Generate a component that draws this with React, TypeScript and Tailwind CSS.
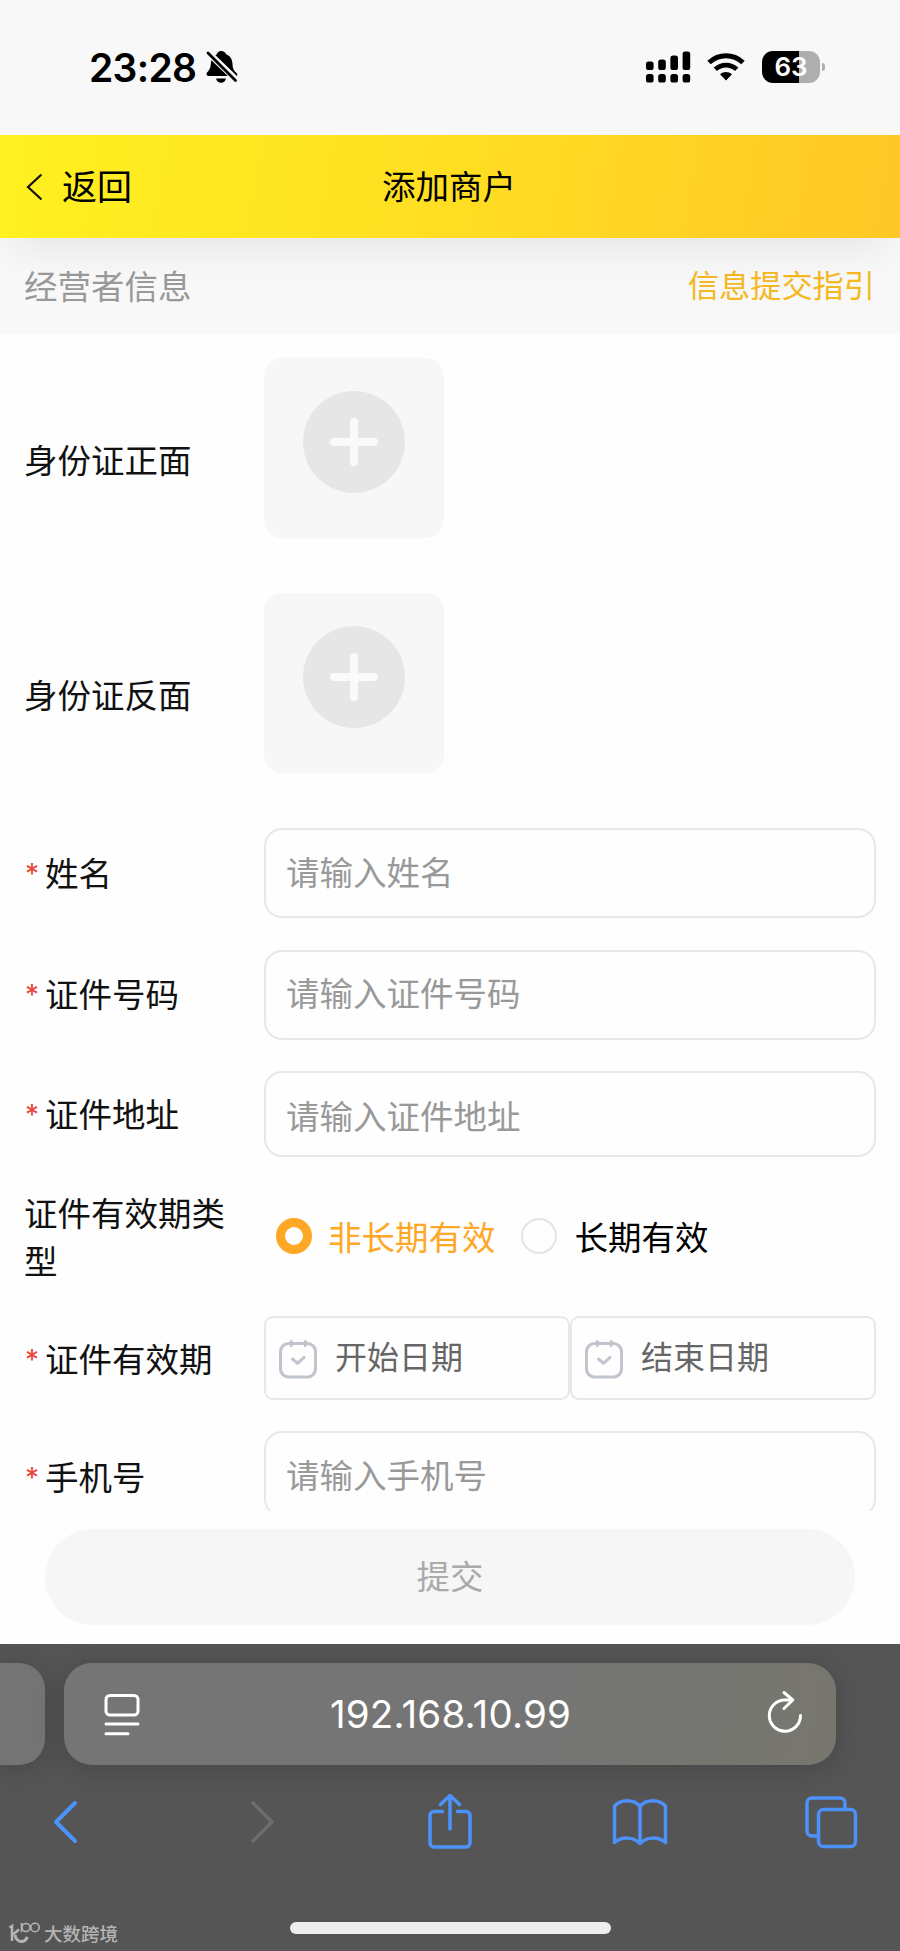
import type { ReactNode } from "react";

const FONT = "font-['Inter','Noto_Sans_CJK_SC',sans-serif]";

function StatusBar() {
  return (
    <div className="flex h-[135px] shrink-0 items-start justify-between bg-[#f8f8f8] pl-[89px] pr-[75px] pt-[48px] text-black">
      <div className="flex h-[38px] items-center">
        <span className="w-[108px] whitespace-nowrap pt-[2px] text-[39px] font-semibold leading-[38px] tracking-[-0.7px]">23:28</span>
        <svg className="ml-[8px]" width="36" height="38" viewBox="0 0 36 38">
          <path
            d="M16 3c2.700 0 4.600 1.300 5.100 3.200 4.200 1.600 6.200 5.200 6.400 9.800.2 4.600 1.200 6.500 4 9 .8.800 1 1.600.6 2.900H3.600C2 27.900 1 26.700 1.800 24.700c2.800-2.900 3.700-4.500 4-9C6.100 11 8.100 7.800 11.900 6.200 12.300 4.300 13.800 3 16 3Z"
            fill="#000"
          />
          <path d="M11 30.500h10c-.6 2.800-2.600 4.300-5 4.300s-4.400-1.500-5-4.300Z" fill="#000" />
          <path d="M2.500 4 32 32.500" stroke="#f8f8f8" strokeWidth="6.500" />
          <path d="M3 5 30.500 32.500" stroke="#000" strokeWidth="2.800" strokeLinecap="round" />
        </svg>
      </div>
      <div className="flex h-[38px] items-center">
        <svg width="46" height="34" viewBox="0 0 46 34">
          {[11, 9, 5, 1].map((y, i) => (
            <g key={y}>
              <rect x={1 + i * 12.2} y={y + 0.5} width="7.600" height={19.5 - y} rx="2.600" />
              <rect x={1 + i * 12.2} y="24" width="7.600" height="8.500" rx="2.600" />
            </g>
          ))}
        </svg>
        <svg className="ml-[15px]" width="40" height="32" viewBox="0 0 40 32">
          <path d="M3 11.500C13 2.500 27 2.500 37 11.500" fill="none" stroke="#000" strokeWidth="5" />
          <path d="M9.300 18.300c6.300-5.700 15.100-5.700 21.400 0" fill="none" stroke="#000" strokeWidth="4.800" />
          <path d="M14 23.200c3.700-3.100 8.300-3.100 12 0l-6 6.300Z" />
        </svg>
        <div className="ml-[16px] flex h-[32px] w-[58px] items-center justify-center rounded-[11px] bg-[linear-gradient(90deg,#000_63%,#aeaeae_63%)] text-[26px] font-semibold leading-none text-white">
          63
        </div>
        <div className="ml-[2px] h-[8px] w-[3px] rounded-r-full bg-[#b0b0b0]" />
      </div>
    </div>
  );
}

function Header() {
  return (
    <header className="relative flex h-[103px] shrink-0 items-center bg-[linear-gradient(100deg,#fff120_0%,#ffdf22_48%,#ffc726_100%)] shadow-[0_24px_40px_-14px_rgba(0,0,0,0.08)]">
      <div className="flex flex-1 items-center pl-[26px]">
        <svg width="17" height="28" viewBox="0 0 17 28" fill="none" stroke="#111" strokeWidth="2.200">
          <path d="M15.500 1.500 2 14l13.500 12.500" />
        </svg>
        <span className="ml-[19px] text-[35px] leading-[50px]">返回</span>
      </div>
      <h1 className="text-[33.500px] leading-[50px]">添加商户</h1>
      <div className="flex-1 pr-[28px]" />
    </header>
  );
}

interface RowProps {
  label: string;
  required?: boolean;
  className: string;
  labelClass?: string;
  children: ReactNode;
}

function Row({ label, required, className, labelClass = "pt-[2px]", children }: RowProps) {
  return (
    <div className={`flex shrink-0 pl-[25px] pr-[24px] ${className}`}>
      <div className={`flex w-[239px] shrink-0 items-center text-[33.500px] leading-[48px] text-[#111] ${labelClass}`}>
        {required && <span className="w-[20px] text-[28px] text-[#e8453c]">*</span>}
        <span className="w-[206px]">{label}</span>
      </div>
      {children}
    </div>
  );
}

function UploadBox() {
  return (
    <button className="flex size-[180px] items-start justify-center rounded-[18px] bg-[#f7f7f7] pt-[33px]">
      <svg width="102" height="102" viewBox="0 0 102 102">
        <circle cx="51" cy="51" r="51" fill="#e6e6e6" />
        <path d="M51 31v40M31 51h40" stroke="#fafafa" strokeWidth="8" strokeLinecap="round" />
      </svg>
    </button>
  );
}

function Field({ text, className = "" }: { text: string; className?: string }) {
  return (
    <div className={`flex flex-1 items-center rounded-[18px] border-2 border-[#e8e8e8] pl-[20px] text-[33.500px] text-[#999] ${className}`}>
      <span className="leading-[48px]">{text}</span>
    </div>
  );
}

function DateField({ text }: { text: string }) {
  return (
    <div className="flex h-[84px] flex-1 items-center rounded-[9px] border-2 border-[#e8e8e8] pl-[13px] text-[32px] text-[#666]">
      <svg className="mt-[2px]" width="38" height="39" viewBox="0 0 38 39" fill="none" stroke="#c0c4cc" strokeWidth="3" strokeLinecap="round" strokeLinejoin="round">
        <rect x="1.500" y="3.500" width="35" height="33.500" rx="8" />
        <path d="M12.300 1.500v4M26.300 1.500v4M13.500 19l5 4.300 6.500-6" />
      </svg>
      <span className="ml-[18px] leading-[48px]">{text}</span>
    </div>
  );
}

function BrowserBar() {
  return (
    <div className="flex h-[307px] shrink-0 flex-col bg-[#555]">
      <div className="mt-[19px] flex h-[102px] shrink-0">
        <div className="w-[45px] rounded-r-[26px] bg-[#747474] shadow-[0_4px_28px_rgba(0,0,0,0.18)]" />
        <div className="ml-[19px] flex w-[772px] items-center rounded-[28px] bg-[linear-gradient(100deg,#757575_60%,#77766e_100%)] pl-[40px] pr-[33px] text-white shadow-[0_4px_28px_rgba(0,0,0,0.18)]">
          <svg className="mt-[2px]" width="36" height="42" viewBox="0 0 36 42" fill="none" stroke="#fff" strokeWidth="3" strokeLinecap="round">
            <rect x="2" y="1.500" width="32" height="19.500" rx="4" />
            <path d="M2 30h32M2 39.800h22" />
          </svg>
          <span className="flex-1 pr-[6px] text-center text-[38.500px] leading-[48px] tracking-[0.2px]">192.168.10.99</span>
          <svg className="-mt-[4px]" width="36" height="44" viewBox="0 0 36 44" fill="none" stroke="#fff" strokeWidth="3" strokeLinecap="round" strokeLinejoin="round">
            <path d="M33.500 25.500A15.600 15.600 0 1 1 18 10h7.500M17 2.500l8.800 7.500-8.800 8.500" />
          </svg>
        </div>
      </div>
      <div className="flex h-[110px] shrink-0 items-center pl-[52px] pr-[42px] pt-[4px] text-[#4b93fb]">
        <svg width="26" height="44" viewBox="0 0 26 44" fill="none" stroke="currentColor" strokeWidth="4" strokeLinecap="round" strokeLinejoin="round">
          <path d="M23 3 4 22l19 19" />
        </svg>
        <svg className="ml-[171px] text-[#6d6d6d]" width="26" height="44" viewBox="0 0 26 44" fill="none" stroke="currentColor" strokeWidth="3.500" strokeLinecap="round" strokeLinejoin="round">
          <path d="M4 3l19 19L4 41" />
        </svg>
        <svg className="-mt-[2px] ml-[152px]" width="46" height="56" viewBox="0 0 46 56" fill="none" stroke="currentColor" strokeWidth="3.500" strokeLinecap="round" strokeLinejoin="round">
          <path d="M15.500 18.500H7a4 4 0 0 0-4 4V50a4 4 0 0 0 4 4h32a4 4 0 0 0 4-4V22.500a4 4 0 0 0-4-4h-8.500M23 36V3M13.500 11.500 23 2.500l9.500 9" />
        </svg>
        <svg className="ml-[138px]" width="58" height="48" viewBox="0 0 58 48" fill="none" stroke="currentColor" strokeWidth="3.500" strokeLinejoin="round">
          <path d="M29 8.500v37M29 8.500C23 .8 9 .8 3.500 8.500v36c7-6 18.500-6 25.500 1 7-7 18.500-7 25.500-1v-36C49 .8 35 .8 29 8.500Z" />
        </svg>
        <svg className="ml-auto" width="54" height="54" viewBox="0 0 54 54" fill="none" stroke="currentColor" strokeWidth="3.500">
          <path d="M14 41H8a5 5 0 0 1-5-5V8a5 5 0 0 1 5-5h28a5 5 0 0 1 5 5v6" />
          <rect x="14.500" y="14.500" width="37" height="37" rx="5" />
        </svg>
      </div>
      <div className="mt-[16px] flex h-[60px] items-start">
        <div className="flex w-[290px] items-center pl-[8px] pt-[31px] text-[#b4b4b4]">
          <svg className="-mt-[3px]" width="34" height="24" viewBox="0 0 34 24" fill="none" stroke="currentColor" strokeLinecap="round">
            <path d="M1.500 6.500 4 5v15M5 13.500l6-5" strokeWidth="2.600" strokeLinecap="butt" />
            <path d="M7 14c1.500 7.500 9 9 12.500 2" strokeWidth="3" strokeLinecap="butt" />
            <path d="M13.500 2.500v8" strokeWidth="1.600" />
            <circle cx="18" cy="6.500" r="4" strokeWidth="1.600" />
            <circle cx="27" cy="6.500" r="4.200" strokeWidth="1.600" />
          </svg>
          <span className="ml-[2px] text-[18.500px] font-medium leading-[24px]">大数跨境</span>
        </div>
        <div className="mt-[31px] h-[12px] w-[321px] rounded-full bg-[#eee]" />
      </div>
    </div>
  );
}

export default function App() {
  return (
    <div className={`flex h-[1951px] w-[900px] flex-col overflow-hidden bg-[#fefefe] text-black ${FONT}`}>
      <StatusBar />
      <div className="flex h-[1376px] shrink-0 flex-col overflow-hidden">
        <Header />
        <div className="flex h-[96px] shrink-0 items-center justify-between bg-[#f8f8f8] pl-[24px] pr-[25px]">
          <span className="pt-[2px] text-[33.500px] leading-[48px] text-[#999]">经营者信息</span>
          <a className="text-[31.200px] leading-[48px] text-[#f5b722]">信息提交指引</a>
        </div>
        <Row label="身份证正面" className="mt-[24px] h-[205px]" labelClass="-ml-px mr-px"><UploadBox /></Row>
        <Row label="身份证反面" className="mt-[30px] h-[205px]" labelClass="-ml-px mr-px"><UploadBox /></Row>
        <Row label="姓名" required className="mt-[30px] h-[90px]"><Field text="请输入姓名" /></Row>
        <Row label="证件号码" required className="mt-[31.500px] h-[90px]" labelClass="pt-px"><Field text="请输入证件号码" className="pb-[2px]" /></Row>
        <Row label="证件地址" required className="mt-[31.500px] h-[86px]"><Field text="请输入证件地址" className="pt-[6px]" /></Row>
        <Row label="证件有效期类型" className="mt-[30px] h-[96px]" labelClass="-ml-px mr-px pt-[5px]">
          <div className="flex items-center pl-[12px] pt-[2px] text-[33.500px] leading-[48px]">
            <span className="size-[36px] rounded-full border-[9px] border-[#ffa726]" />
            <span className="ml-[16px] pt-[3px] text-[#ffa726]">非长期有效</span>
            <span className="ml-[25px] size-[36px] rounded-full border-2 border-[#e4e4e4]" />
            <span className="ml-[18px] pt-[3px]">长期有效</span>
          </div>
        </Row>
        <Row label="证件有效期" required className="mt-[33px] h-[84px]" labelClass="pt-[3px]">
          <DateField text="开始日期" />
          <DateField text="结束日期" />
        </Row>
        <Row label="手机号" required className="mt-[31px] h-[86px]" labelClass="pt-[7px]"><Field text="请输入手机号" className="pt-[3px]" /></Row>
      </div>
      <div className="flex h-[133px] shrink-0 flex-col px-[45px] pt-[18px]">
        <button className="h-[96px] rounded-full bg-[#f6f6f6] text-[33.500px] leading-[48px] text-[#aaa]">提交</button>
      </div>
      <BrowserBar />
    </div>
  );
}
